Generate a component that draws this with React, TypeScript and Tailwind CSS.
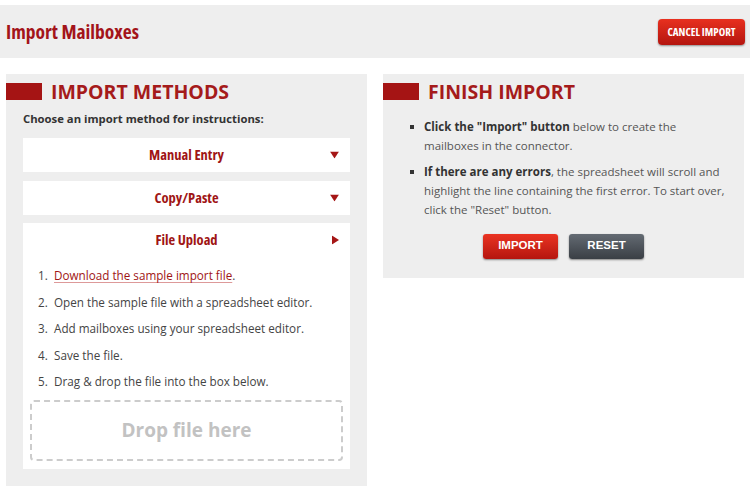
import React from "react";

const cond = "font-['Open_Sans','Liberation_Sans_Narrow',sans-serif] font-bold [font-stretch:75%]";

function Arrow({ dir }: { dir: "down" | "right" }) {
  return dir === "down" ? (
    <svg width="9" height="7" viewBox="0 0 9 7" className="block">
      <polygon points="0,0 9,0 4.5,7" fill="#a51616" />
    </svg>
  ) : (
    <svg width="7" height="9" viewBox="0 0 7 9" className="block">
      <polygon points="0,0 7,4.5 0,9" fill="#a51616" />
    </svg>
  );
}

function Item({ title, dir, children }: { title: string; dir: "down" | "right"; children?: React.ReactNode }) {
  return (
    <div className="bg-white mx-[17px]">
      <div className="relative h-[34px] flex items-center justify-center">
        <span className={`${cond} text-[14.5px] text-[#a01515]`}>{title}</span>
        <span className="absolute right-[11px] top-1/2 -translate-y-1/2">
          <Arrow dir={dir} />
        </span>
      </div>
      {children}
    </div>
  );
}

export default function App() {
  const steps: React.ReactNode[] = [
    <>
      <a className="text-[#a01515] underline decoration-[#d99] underline-offset-2">Download the sample import file</a>.
    </>,
    "Open the sample file with a spreadsheet editor.",
    "Add mailboxes using your spreadsheet editor.",
    "Save the file.",
    "Drag & drop the file into the box below.",
  ];
  return (
    <div className="w-[750px] h-[494px] bg-white font-['Open_Sans',sans-serif] pt-[5px]">
      <div className="h-[53px] bg-[#eeeeee] flex items-center justify-between pl-[6px] pr-[5px]">
        <h1 className={`${cond} text-[19.5px] text-[#a3141a]`}>Import Mailboxes</h1>
        <button className={`${cond} h-[26px] w-[87px] mt-[1px] rounded-[4px] bg-gradient-to-b from-[#e8301f] to-[#b4150f] text-white text-[11px] shadow-[0_1px_2px_rgba(0,0,0,0.4)]`}>
          CANCEL IMPORT
        </button>
      </div>
      <div className="flex gap-[16px] pl-[6px] mt-[16px] items-start">
        <div className="w-[361px] bg-[#eeeeee] pt-[9px] pb-[17px]">
          <div className="flex items-center">
            <div className="w-[36px] h-[17px] bg-[#a51414]" />
            <h2 className="ml-[9px] text-[19.5px] leading-[17px] font-bold text-[#a51b1b]">IMPORT METHODS</h2>
          </div>
          <p className="pl-[17px] mt-[10px] text-[11.3px] font-bold text-[#333] leading-[18px]">Choose an import method for instructions:</p>
          <div className="mt-[10px] flex flex-col gap-[8.5px]">
            <Item title="Manual Entry" dir="down" />
            <Item title="Copy/Paste" dir="down" />
            <Item title="File Upload" dir="right">
              <ol className="pt-[6px] pl-[15px] text-[11.7px] text-[#444]">
                {steps.map((s, i) => (
                  <li key={i} className="h-[26.5px] flex items-center">
                    <span className="w-[16px]">{i + 1}.</span>
                    <span>{s}</span>
                  </li>
                ))}
              </ol>
              <div className="px-[7px] pt-[4px] pb-[8px]">
                <div className="h-[61px] border-2 border-dashed border-[#cccccc] rounded-[4px] flex items-center justify-center">
                  <span className="text-[19px] font-bold text-[#c2c2c2]">Drop file here</span>
                </div>
              </div>
            </Item>
          </div>
        </div>
        <div className="w-[361px] bg-[#eeeeee] pt-[9px] pb-[19px]">
          <div className="flex items-center">
            <div className="w-[36px] h-[17px] bg-[#a51414]" />
            <h2 className="ml-[9px] text-[19.5px] leading-[17px] font-bold text-[#a51b1b]">FINISH IMPORT</h2>
          </div>
          <ul className="mt-[17px] pl-[41px] pr-[12px] text-[11.5px] leading-[19px] text-[#555]">
            <li className="relative">
              <span className="absolute -left-[14px] top-[8px] w-[4px] h-[4px] bg-[#333]" />
              <b className="text-[#333]">Click the "Import" button</b> below to create the mailboxes in the connector.
            </li>
            <li className="relative mt-[7px]">
              <span className="absolute -left-[14px] top-[8px] w-[4px] h-[4px] bg-[#333]" />
              <b className="text-[#333]">If there are any errors</b>, the spreadsheet will scroll and highlight the line containing the first error. To start over, click the "Reset" button.
            </li>
          </ul>
          <div className="mt-[14.5px] flex justify-center gap-[11px]">
            <button className="w-[75px] h-[25px] rounded-[3px] bg-gradient-to-b from-[#ea3322] to-[#b5150f] text-white text-[11.5px] font-bold font-['Liberation_Sans',sans-serif] shadow-[0_1px_2px_rgba(0,0,0,0.45)]">IMPORT</button>
            <button className="w-[75px] h-[25px] rounded-[3px] bg-gradient-to-b from-[#646b73] to-[#3a3f45] text-white text-[11.5px] font-bold font-['Liberation_Sans',sans-serif] shadow-[0_1px_2px_rgba(0,0,0,0.45)]">RESET</button>
          </div>
        </div>
      </div>
    </div>
  );
}
